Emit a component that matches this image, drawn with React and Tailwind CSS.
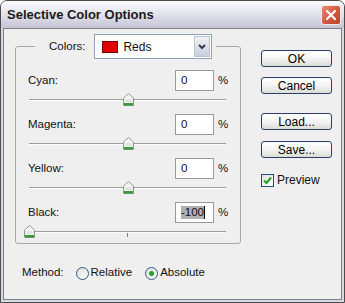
import React from 'react'

const ROWS = [
  { label: 'Cyan:', value: '0', pos: 0.5 },
  { label: 'Magenta:', value: '0', pos: 0.5 },
  { label: 'Yellow:', value: '0', pos: 0.5 },
  { label: 'Black:', value: '-100', pos: 0, selected: true },
]

function Thumb() {
  return (
    <svg width="11" height="13" viewBox="0 0 11 13">
      <path d="M5.5 0.5 L10.5 5 L10.5 12.5 L0.5 12.5 L0.5 5 Z" fill="#f4f4f0" stroke="#8c9c8c" />
      <path d="M1.5 6 L9.5 6 L9.5 9 L1.5 9 Z" fill="#dfe6df" />
      <rect x="1" y="10" width="9" height="2.5" fill="#3c9a3c" />
    </svg>
  )
}

function Slider({ pos }) {
  return (
    <div className="relative h-[23px] ml-[1px] w-[197px]">
      <div className="absolute left-0 right-0 top-[8px] h-[1px] bg-[#9d9d9d]" />
      <div className="absolute left-0 right-0 top-[9px] h-[1px] bg-white" />
      <div className="absolute left-[98px] top-[10px] w-[1px] h-[4px] bg-[#7a7a7a]" />
      <div className="absolute top-[2px]" style={{ left: Math.round(pos * 197) - 5 }}>
        <Thumb />
      </div>
    </div>
  )
}

function Row({ row, last }) {
  return (
    <div>
      <div className="flex items-center h-[21px]">
        <span className="flex-1">{row.label}</span>
        <div className="w-[39px] h-[21px] border border-[#9a9a9a] bg-white flex items-center pl-[5px]">
          {row.selected ? (
            <>
              <span className="bg-[#b0b0b0] leading-[13px]">{row.value}</span>
              <span className="w-[1px] h-[13px] bg-black" />
            </>
          ) : (
            row.value
          )}
        </div>
        <span className="ml-[4px] w-[10px]">%</span>
      </div>
      <div className={last ? 'h-[20px]' : 'h-[23px]'}>
        <Slider pos={row.pos} />
      </div>
    </div>
  )
}

function Button({ children }) {
  return (
    <button className="w-[71px] h-[17px] rounded-[3px] border border-[#2a3f66] bg-gradient-to-b from-white via-[#f4f4f2] to-[#dcdcd6] flex items-center justify-center text-[12px] leading-none text-black">
      {children}
    </button>
  )
}

function Radio({ checked }) {
  return (
    <span className="w-[13px] h-[13px] rounded-full border border-[#2d5c8c] bg-gradient-to-br from-[#dcdcd6] to-white flex items-center justify-center">
      {checked && <span className="w-[5px] h-[5px] rounded-full bg-[#2aa32a]" />}
    </span>
  )
}

export default function App() {
  return (
    <div className="w-[345px] h-[303px] flex flex-col border border-[#4c4c4c] rounded-t-[7px] bg-[#d8d8e2] overflow-hidden font-['Liberation_Sans',Arial,sans-serif] text-[11.5px] text-[#111]">
      {/* Title bar */}
      <div className="h-[27px] flex items-center justify-between pl-[6px] pr-[3px] bg-gradient-to-b from-[#fbfbfd] via-[#e2e2ec] to-[#c4c4d4]">
        <span className="font-bold text-[13px] text-[#1a1a1a]">Selective Color Options</span>
        <div className="w-[20px] h-[20px] rounded-[3px] border border-[#f4e8e6] bg-gradient-to-br from-[#ec8a72] via-[#d65a44] to-[#b8402c] flex items-center justify-center">
          <svg width="12" height="12" viewBox="0 0 12 12">
            <path d="M2 2 L10 10 M10 2 L2 10" stroke="white" strokeWidth="2.2" strokeLinecap="round" />
          </svg>
        </div>
      </div>

      {/* Client */}
      <div className="flex-1 mx-[2px] mb-[2px] border border-[#7e7e86] bg-[#efefef] flex">
        <div className="flex flex-col">
          <fieldset className="ml-[11px] mt-[5px] w-[226px] border border-[#a8a8a8] rounded-[3px] pl-[12px] pr-[12px] pt-[11px]">
            <legend className="ml-[7px] pl-[14px] pr-[4px]">
              <div className="flex items-center">
                <span>Colors:</span>
                <div className="ml-[9px] w-[118px] h-[25px] border border-[#8fa3bd] bg-white flex items-center">
                  <span className="ml-[7px] w-[16px] h-[12px] bg-[#e00000] border border-[#7a0000]" />
                  <span className="ml-[5px] text-[12px]">Reds</span>
                  <div className="ml-auto mr-[1px] w-[16px] h-[21px] border border-[#b8c4d6] bg-gradient-to-b from-[#f2f2f6] to-[#c8cede] flex items-center justify-center">
                    <svg width="8" height="6" viewBox="0 0 8 6">
                      <path d="M1 1 L4 4 L7 1" stroke="#3a3a4a" strokeWidth="2" fill="none" />
                    </svg>
                  </div>
                </div>
              </div>
            </legend>
            {ROWS.map((r, i) => (
              <Row key={r.label} row={r} last={i === ROWS.length - 1} />
            ))}
          </fieldset>

          {/* Method */}
          <div className="flex items-center ml-[18px] mt-[22px] h-[14px]">
            <span>Method:</span>
            <span className="ml-[12px]"><Radio /></span>
            <span className="ml-[2px]">Relative</span>
            <span className="ml-[13px]"><Radio checked /></span>
            <span className="ml-[2px]">Absolute</span>
          </div>
        </div>

        {/* Buttons */}
        <div className="ml-[20px] mt-[21px] flex flex-col">
          <Button>OK</Button>
          <div className="mt-[10px]"><Button>Cancel</Button></div>
          <div className="mt-[19px]"><Button>Load...</Button></div>
          <div className="mt-[11px]"><Button>Save...</Button></div>
          <div className="mt-[13px] flex items-center">
            <span className="w-[13px] h-[13px] border border-[#1f4f7e] bg-gradient-to-br from-[#e2e2dc] to-white flex items-center justify-center">
              <svg width="9" height="9" viewBox="0 0 9 9">
                <path d="M1 4.5 L3.5 7 L8 1.5" stroke="#21a021" strokeWidth="2" fill="none" />
              </svg>
            </span>
            <span className="ml-[3px] text-[12px]">Preview</span>
          </div>
        </div>
      </div>
    </div>
  )
}
